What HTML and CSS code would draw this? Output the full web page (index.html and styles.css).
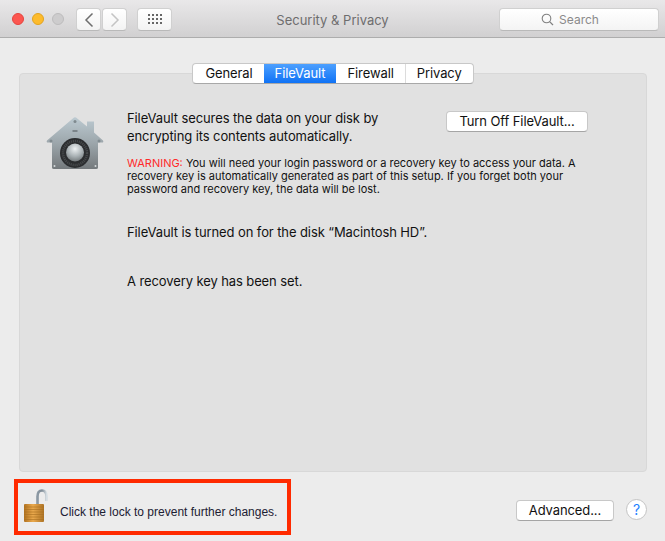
FILE: index.html
```html
<!DOCTYPE html>
<html lang="en">
<head>
<meta charset="utf-8">
<title>Security &amp; Privacy</title>
<link rel="stylesheet" href="styles.css">
</head>
<body>
<div class="window">
  <header class="titlebar">
    <div class="lights">
      <span class="light red"></span>
      <span class="light yellow"></span>
      <span class="light grey"></span>
    </div>
    <div class="nav">
      <button class="tool back"><svg width="10" height="16" viewBox="0 0 10 16"><path d="M8.500 1.500 2 8l6.500 6.500" fill="none" stroke="#6e6e6e" stroke-width="1.500"/></svg></button>
      <button class="tool forward"><svg width="10" height="16" viewBox="0 0 10 16"><path d="M1.500 1.500 8 8l-6.500 6.500" fill="none" stroke="#c4c4c4" stroke-width="1.500"/></svg></button>
    </div>
    <button class="tool grid"><svg width="15" height="11" viewBox="0 0 15 11" fill="#666"><rect x="0" y="0" width="2" height="2"/><rect x="4" y="0" width="2" height="2"/><rect x="8" y="0" width="2" height="2"/><rect x="12" y="0" width="2" height="2"/><rect x="0" y="4" width="2" height="2"/><rect x="4" y="4" width="2" height="2"/><rect x="8" y="4" width="2" height="2"/><rect x="12" y="4" width="2" height="2"/><rect x="0" y="8" width="2" height="2"/><rect x="4" y="8" width="2" height="2"/><rect x="8" y="8" width="2" height="2"/><rect x="12" y="8" width="2" height="2"/></svg></button>
    <div class="title">Security &amp; Privacy</div>
    <div class="search"><svg width="13" height="13" viewBox="0 0 13 13"><circle cx="5.500" cy="5.500" r="4.300" fill="none" stroke="#808080" stroke-width="1.100"/><path d="M8.600 8.600 12 12" stroke="#808080" stroke-width="1.200"/></svg><span>Search</span></div>
  </header>

  <main class="content">
    <nav class="tabs">
      <span class="tab">General</span>
      <span class="tab active">FileVault</span>
      <span class="tab">Firewall</span>
      <span class="tab">Privacy</span>
    </nav>
    <section class="panel">
      <div class="intro">
        <svg class="house" width="60" height="56" viewBox="0 0 60 56">
          <defs>
            <linearGradient id="hg" x1="0" y1="0" x2="0" y2="1"><stop offset="0" stop-color="#bccad1"/><stop offset=".5" stop-color="#9ca6ab"/><stop offset="1" stop-color="#74797c"/></linearGradient>
            <radialGradient id="kg" cx=".5" cy=".3" r=".75"><stop offset="0" stop-color="#eef2f3"/><stop offset=".55" stop-color="#aab2b5"/><stop offset="1" stop-color="#6d7375"/></radialGradient>
          </defs>
          <path d="M29 1.500Q30 1 31 1.500L42 10.500V5.500H49V16.500L58 24.500Q59 26.500 57 26.500H53V51.500Q53 53 51 53H9Q7 53 7 51.500V26.500H3Q1 26.500 2 24.500Z" fill="url(#hg)"/>
          <circle cx="30" cy="37" r="15" fill="#2b2d2f"/>
          <circle cx="30" cy="37" r="12" fill="none" stroke="#46494b" stroke-width="2.500" stroke-dasharray="1.200 .8"/>
          <circle cx="30" cy="36.500" r="9" fill="url(#kg)"/>
          <circle cx="30" cy="5.500" r="1.500" fill="#7f8a8f"/>
          <circle cx="6" cy="25" r="1.500" fill="#7f8a8f"/>
          <circle cx="54" cy="25" r="1.500" fill="#7f8a8f"/>
          <rect x="27.500" y="14" width="5" height="2" fill="#7b8489"/>
          <circle cx="9.500" cy="50" r="1" fill="#d5d9db"/>
          <circle cx="50.500" cy="50" r="1" fill="#d5d9db"/>
        </svg>
        <div class="copy">
          <div class="top">
            <p class="lead">FileVault secures the data on your disk by<br>encrypting its contents automatically.</p>
            <button class="btn off">Turn Off FileVault...</button>
          </div>
          <p class="warning"><span class="warn">WARNING:</span> You will need your login password or a recovery key to access your data. A<br>recovery key is automatically generated as part of this setup. If you forget both your<br>password and recovery key, the data will be lost.</p>
          <p class="status first">FileVault is turned on for the disk “Macintosh HD”.</p>
          <p class="status second">A recovery key has been set.</p>
        </div>
      </div>
    </section>
    <footer class="footer">
      <div class="lockbox">
        <svg class="lock" width="26" height="34" viewBox="0 0 26 34">
          <defs>
            <linearGradient id="lg" x1="0" y1="0" x2="1" y2="0"><stop offset="0" stop-color="#b0711f"/><stop offset=".45" stop-color="#eaa94d"/><stop offset="1" stop-color="#ad7325"/></linearGradient>
            <linearGradient id="sg" x1="0" y1="0" x2="1" y2="0"><stop offset="0" stop-color="#8b98a3"/><stop offset=".5" stop-color="#7f8c97"/><stop offset="1" stop-color="#d5dde2"/></linearGradient>
          </defs>
          <path d="M14.500 16V7.500Q14.500 1.500 19 1.500T23.500 7.500V12" fill="none" stroke="url(#sg)" stroke-width="2.600"/>
          <rect x="1" y="15" width="20" height="18" rx="1" fill="url(#lg)"/>
          <path d="M1 18H21M1 20.500H21M1 23H21M1 25.500H21M1 28H21M1 30.500H21" stroke="#a86e20" stroke-width=".6"/>
        </svg>
        <span class="locktext">Click the lock to prevent further changes.</span>
      </div>
      <div class="actions">
        <button class="btn advanced">Advanced...</button>
        <button class="help">?</button>
      </div>
    </footer>
  </main>
</div>
</body>
</html>
```

FILE: styles.css
```css
* { box-sizing: border-box; }
html, body { margin: 0; padding: 0; }
body {
  width: 665px;
  height: 541px;
  overflow: hidden;
  font-family: "Inter", "Liberation Sans", sans-serif;
  color: #1a1a1a;
  background: #ececec;
}
p { margin: 0; }
button { font-family: inherit; padding: 0; margin: 0; }

.window { display: flex; flex-direction: column; height: 541px; }

.titlebar {
  position: relative;
  flex: none;
  height: 38px;
  display: flex;
  align-items: flex-start;
  padding: 8px 6px 0 12px;
  background: linear-gradient(#e9e8e9, #d1d0d1);
  border-bottom: 1px solid #adadad;
}
.lights { display: flex; gap: 8px; margin-top: 5px; }
.light { width: 12px; height: 12px; border-radius: 50%; }
.red { background: #fc5650; border: 1px solid #e5443e; }
.yellow { background: #fdbb2c; border: 1px solid #e2a31f; }
.grey { background: #cdcccd; border: 1px solid #bdbcbd; }
.nav { display: flex; gap: 1px; margin-left: 12px; }
.tool {
  height: 23px;
  width: 25px;
  display: flex;
  align-items: center;
  justify-content: center;
  background: linear-gradient(#ffffff, #f3f3f3);
  border: 1px solid #d0d0d0;
  border-bottom-color: #b9b9b9;
  border-radius: 4px;
}
.grid { width: 35px; margin-left: 10px; }
.grid svg { margin-left: 1px; }
.title {
  position: absolute;
  left: 0;
  right: 0;
  top: 12px;
  text-align: center;
  font-size: 13px;
  line-height: 16px;
  color: #6e6d6e;
}
.search {
  margin-left: auto;
  width: 160px;
  height: 23px;
  display: flex;
  align-items: center;
  justify-content: center;
  gap: 5px;
  padding-right: 18px;
  background: linear-gradient(#ffffff, #f4f4f4);
  border: 1px solid #d0d0d0;
  border-bottom-color: #b9b9b9;
  border-radius: 4px;
  font-size: 12px;
  color: #8a8a8a;
}

.content { flex: 1; display: flex; flex-direction: column; padding: 25px 18px 0 19px; }

.tabs {
  position: relative;
  z-index: 1;
  align-self: center;
  display: flex;
  height: 21px;
  margin-bottom: -11px;
  background: #fff;
  border: 1px solid #c8c8c8;
  border-bottom-color: #a8a8a8;
  border-radius: 4px;
  font-size: 13px;
  line-height: 19px;
  letter-spacing: -0.1px;
  color: #111;
  overflow: hidden;
}
.tab { padding: 0 11px; border-left: 1px solid #dcdcdc; }
.tab:first-child { border-left: 0; padding-left: 12px; }
.tab.active {
  color: #fff;
  border-left: 0;
  background: linear-gradient(#4da0ff, #0f72f5);
}
.tab.active + .tab { border-left: 0; }

.panel {
  flex: none;
  height: 399px;
  background: #e1e1e1;
  border: 1px solid #d8d8d8;
  border-radius: 4px;
  padding: 35px 0 0 25px;
}
.intro { display: flex; }
.house { flex: none; margin-top: 7px; }
.copy { margin-left: 22px; flex: 1; }
.top { display: flex; align-items: flex-start; }
.lead { font-size: 13px; line-height: 18px; width: 319px; letter-spacing: -0.1px; color: #111; }
.btn {
  background: #fff;
  border: 1px solid #c8c8c8;
  border-bottom-color: #a5a5a5;
  border-radius: 4px;
  font-size: 13px;
  line-height: 19px;
  letter-spacing: -0.1px;
  color: #111;
}
.off { width: 142px; height: 21px; margin-top: 2px; }
.warning { margin-top: 12px; font-size: 11px; line-height: 13px; color: #111; }
.warn { color: #ff2a2a; }
.status { font-size: 13px; line-height: 18px; letter-spacing: -0.1px; color: #111; }
.first { margin-top: 27px; }
.second { margin-top: 31px; }

.footer { flex: 1; display: flex; justify-content: space-between; align-items: flex-start; }
.lockbox {
  width: 277px;
  height: 56px;
  margin: 7px 0 0 -5px;
  border: 4px solid #ff2a00;
  display: flex;
  align-items: flex-start;
}
.lock { flex: none; margin: 6px 0 0 5px; }
.locktext {
  margin: 22px 0 0 11px;
  font-family: "Liberation Sans", Arial, sans-serif;
  font-size: 12px;
  line-height: 15px;
  color: #1c2033;
}
.actions { display: flex; align-items: flex-start; gap: 12px; margin-top: 27px; }
.advanced { width: 98px; height: 21px; margin-top: 1px; }
.help {
  width: 21px;
  height: 21px;
  border-radius: 50%;
  background: #fff;
  border: 1px solid #c4c4c4;
  color: #1f7fff;
  font-size: 14px;
  line-height: 19px;
}
```
